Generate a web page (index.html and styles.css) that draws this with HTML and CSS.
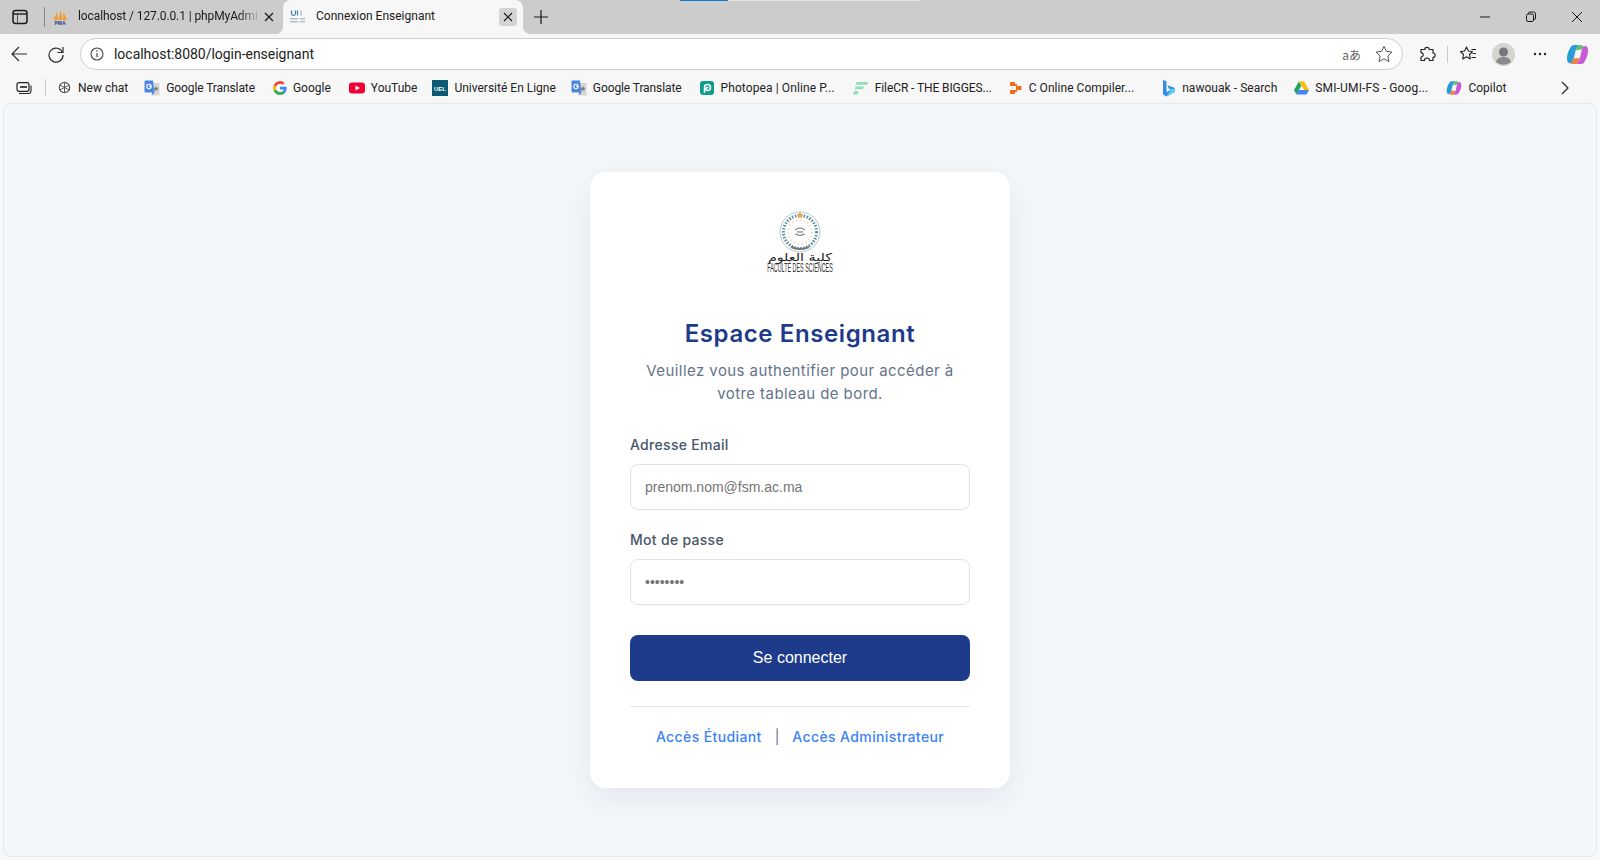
FILE: index.html
```html
<!DOCTYPE html>
<html lang="fr">
<head>
<meta charset="utf-8">
<title>Connexion Enseignant</title>
<link rel="stylesheet" href="styles.css">
</head>
<body>
<div class="browser">
  <header class="tabstrip">
    <div class="loadbar"><span class="loadbar-done"></span><span class="loadbar-rest"></span></div>
    <svg class="ic sidebar-ic" width="16" height="16" viewBox="0 0 16 16"><rect x="1" y="1.500" width="14" height="13" rx="2.500" fill="none" stroke="#1a1a1a" stroke-width="1.500"/><path d="M1 5h14" stroke="#1a1a1a" stroke-width="1.400" fill="none"/><path d="M5.500 5v9" stroke="#1a1a1a" stroke-width=".7"/></svg>
    <span class="strip-sep"></span>
    <div class="tab">
      <svg class="ic" width="16" height="16" viewBox="0 0 16 16"><path d="M1.500 11 5 3l1 8zM6.500 11 8.500 1l2 10zM11 11l.5-8 3.500 8z" fill="#f29a2e"/><text x="8" y="15.500" class="pma" text-anchor="middle">PMA</text></svg>
      <span class="tab-title tab-title-fade">localhost / 127.0.0.1 | phpMyAdmi</span>
      <svg class="ic tab-x" width="12" height="12" viewBox="0 0 12 12"><path d="M2 2l8 8M10 2l-8 8" stroke="#1a1a1a" stroke-width="1.200"/></svg>
    </div>
    <div class="tab tab-active">
      <svg class="ic" width="16" height="16" viewBox="0 0 16 16"><path d="M1.500 1.500v3a2 2 0 0 0 4 0v-3M7.500 6.500v-5" stroke="#3f87a8" stroke-width="1.200" fill="none"/><rect x="10" y="1" width="2" height="6" rx="1" fill="#c9d3da"/><path d="M0 9h8v1.500H0zM0 12h8v1.500H0zM9.500 9H15v1.500H9.500zM9.500 12H15v1.500H9.500z" fill="#b6bfc6"/></svg>
      <span class="tab-title">Connexion Enseignant</span>
      <span class="tab-close"><svg width="10" height="10" viewBox="0 0 10 10"><path d="M1 1l8 8M9 1l-8 8" stroke="#1a1a1a" stroke-width="1.200"/></svg></span>
    </div>
    <svg class="ic new-tab" width="16" height="16" viewBox="0 0 16 16"><path d="M8 1v14M1 8h14" stroke="#1a1a1a" stroke-width="1.200"/></svg>
    <div class="winctl">
      <svg width="12" height="12" viewBox="0 0 12 12"><path d="M1 6h10" stroke="#1a1a1a" stroke-width="1"/></svg>
      <svg width="12" height="12" viewBox="0 0 12 12"><rect x="1.500" y="3" width="7" height="7.500" rx="1.500" fill="none" stroke="#1a1a1a"/><path d="M3.500 3V2.500a1.500 1.500 0 0 1 1.500-1.500h3.500a2 2 0 0 1 2 2V7a1.500 1.500 0 0 1-1.500 1.500" fill="none" stroke="#1a1a1a"/></svg>
      <svg width="12" height="12" viewBox="0 0 12 12"><path d="M1 1l10 10M11 1L1 11" stroke="#1a1a1a" stroke-width="1"/></svg>
    </div>
  </header>

  <div class="toolbar">
    <svg class="ic back" width="18" height="18" viewBox="0 0 18 18"><path d="M17 9H2M9 2 2 9l7 7" fill="none" stroke="#2b2b2b" stroke-width="1.200"/></svg>
    <svg class="ic reload" width="18" height="18" viewBox="0 0 18 18"><path d="M15.500 7.500A7 7 0 1 0 16 10" fill="none" stroke="#2b2b2b" stroke-width="1.200"/><path d="M16 2v5.500h-5.500" fill="none" stroke="#2b2b2b" stroke-width="1.200"/></svg>
    <div class="omnibox">
      <svg class="ic" width="14" height="14" viewBox="0 0 14 14"><circle cx="7" cy="7" r="6" fill="none" stroke="#444" stroke-width="1.100"/><path d="M7 6v4.200" stroke="#444" stroke-width="1.200"/><circle cx="7" cy="4" r=".8" fill="#444"/></svg>
      <span class="url">localhost:8080/login-enseignant</span>
      <span class="aa">aあ</span>
      <svg class="ic" width="20" height="20" viewBox="0 0 20 20"><path d="m10 2.200 2.400 5.200 5.600.700-4.100 3.900 1.100 5.600-5-2.800-5 2.800 1.100-5.600L2 8.100l5.600-.700z" fill="none" stroke="#555" stroke-width="1" stroke-linejoin="round"/></svg>
    </div>
    <svg class="ic ext" width="18" height="18" viewBox="0 0 18 18"><path d="M3 4.500h3.800a2.200 2.200 0 1 1 4.400 0H15V8a2.200 2.200 0 1 1 0 4.400v3.100h-3.500a2.500 2.500 0 0 0-5 0H3V12a2.200 2.200 0 1 0 0-4.400z" fill="none" stroke="#222" stroke-width="1.200" stroke-linejoin="round"/></svg>
    <span class="tool-sep"></span>
    <svg class="ic fav" width="18" height="18" viewBox="0 0 18 18"><path d="m7.500 2 1.900 4 4.100.500-3 3 .8 4.500-3.800-2.200L3.700 14l.8-4.500-3-3 4.100-.500z" fill="none" stroke="#222" stroke-width="1.100" stroke-linejoin="round"/><path d="M12.500 4.500H17M13.500 8.500H17M12.500 12.500H17" stroke="#222" stroke-width="1.100"/></svg>
    <svg class="ic avatar" width="23" height="23" viewBox="0 0 23 23"><circle cx="11.500" cy="11.500" r="11.500" fill="#d6d4d0"/><circle cx="11.500" cy="9" r="4.500" fill="#777"/><path d="M4 19c1-4 4-5 7.500-5s6.500 1 7.500 5a11.500 11.500 0 0 1-15 0z" fill="#8a8a8a"/></svg>
    <svg class="ic dots" width="14" height="4" viewBox="0 0 14 4"><circle cx="2" cy="2" r="1.200" fill="#222"/><circle cx="7" cy="2" r="1.200" fill="#222"/><circle cx="12" cy="2" r="1.200" fill="#222"/></svg>
    <svg class="ic copilot-big" width="23" height="23" viewBox="0 0 24 24"><path d="M4 21c2 0 3.500-2 4-5h6.500c-1 3.500-2 5-4 6H7c-1 0-2-.4-3-1z" fill="#f4803c"/><path d="M9 2h5c-2 1-3 3-4 6l-2 8c-.5 3-2 5-4 5-2 0-3-2-3-5 0-4 2-9 4-12 1-1.500 2.500-2 4-2z" fill="#2a9bd8"/><path d="M9 2h6c2 0 3 1 3.500 2.500L15.500 7c-2 0-3.500 0-5.500 1 1-3 2-5 4-6z" fill="#5ec06b"/><path d="M14.500 22H10.500c2-1 3-3 4-6l1.500-7c.5-4 2-6 4-6 2 0 3 2 3 5 0 4-2 9-4 12-1 1.500-2.500 2-4 2z" fill="#c65ad6"/></svg>
  </div>

  <nav class="bookmarks">
    <svg class="ic bm-split" width="16" height="12" viewBox="0 0 16 12"><rect x="1" y=".7" width="12" height="8.600" rx="2" fill="none" stroke="#222" stroke-width="1.200"/><path d="M4 5h7" stroke="#222" stroke-width="1.600"/><path d="M15 3.500V9a2.500 2.500 0 0 1-2.500 2.500H3" fill="none" stroke="#222" stroke-width="1.100"/></svg>
    <span class="bm-sep"></span>
    <a class="bm"><svg width="15" height="15" viewBox="0 0 16 16"><rect width="16" height="16" rx="2" fill="#fff"/><circle cx="8" cy="8" r="5.500" fill="none" stroke="#555" stroke-width="1.400"/><path d="M8 2.500v11M3 5.500l10 5M13 5.500l-10 5" stroke="#555" stroke-width="1"/></svg><span>New chat</span></a>
    <a class="bm bm-gt"><svg width="16" height="16" viewBox="0 0 16 16"><path d="M7 3h8.500v12.500H8.500z" fill="#d6d6d6"/><path d="M1.500.5H9l1.500 12H1.500a1 1 0 0 1-1-1V1.500a1 1 0 0 1 1-1z" fill="#4a86e8"/><path d="M8.500 12.500 7.500 15.500 10.500 12.500z" fill="#3367c4"/><path d="m12 6 .8 1.800 1.800.2-1.400 1.200.4 1.800-1.600-1-1.600 1 .4-1.800L9.400 8l1.800-.2z" fill="#777"/><circle cx="5" cy="6.500" r="2.200" fill="none" stroke="#fff" stroke-width="1.100"/><path d="M5 6.500h2.200" stroke="#fff" stroke-width="1"/></svg><span>Google Translate</span></a>
    <a class="bm bm-google"><svg width="14" height="14" viewBox="0 0 18 18"><path d="M17.600 9.200q0-.9-.2-1.700H9v3.300h4.800a4.100 4.100 0 0 1-1.800 2.700v2.200h2.900a8.700 8.700 0 0 0 2.700-6.500z" fill="#4285f4"/><path d="M9 18q3.600 0 5.900-2.300L12 13.500q-1.200.8-3 .8a5.300 5.300 0 0 1-5-3.600H1v2.300A9 9 0 0 0 9 18z" fill="#34a853"/><path d="M4 10.700a5.300 5.300 0 0 1 0-3.400V5H1a9 9 0 0 0 0 8z" fill="#fbbc05"/><path d="M9 3.600q2 0 3.400 1.300l2.500-2.500A9 9 0 0 0 1 5l3 2.300a5.300 5.300 0 0 1 5-3.700z" fill="#ea4335"/></svg><span>Google</span></a>
    <a class="bm bm-yt"><svg width="16" height="16" viewBox="0 0 16 16"><rect y="2.500" width="16" height="11" rx="3" fill="#f00034"/><path d="M6.500 5.500v5L11 8z" fill="#fff"/></svg><span>YouTube</span></a>
    <a class="bm bm-uel"><svg width="16" height="16" viewBox="0 0 16 16"><rect width="16" height="16" fill="#0c5a74"/><text x="8" y="10.500" class="uel" text-anchor="middle">UEL</text></svg><span>Université En Ligne</span></a>
    <a class="bm bm-gt"><svg width="16" height="16" viewBox="0 0 16 16"><path d="M7 3h8.500v12.500H8.500z" fill="#d6d6d6"/><path d="M1.500.5H9l1.500 12H1.500a1 1 0 0 1-1-1V1.500a1 1 0 0 1 1-1z" fill="#4a86e8"/><path d="M8.500 12.500 7.500 15.500 10.500 12.500z" fill="#3367c4"/><path d="m12 6 .8 1.800 1.800.2-1.400 1.200.4 1.800-1.600-1-1.600 1 .4-1.800L9.400 8l1.800-.2z" fill="#777"/><circle cx="5" cy="6.500" r="2.200" fill="none" stroke="#fff" stroke-width="1.100"/><path d="M5 6.500h2.200" stroke="#fff" stroke-width="1"/></svg><span>Google Translate</span></a>
    <a class="bm bm-photopea"><svg width="14" height="14" viewBox="0 0 14 14"><rect width="14" height="14" rx="3" fill="#0e9c8c"/><path d="M4.500 12V6.500a3 3 0 1 1 3 3 1.500 1.500 0 1 1 1-2.500" fill="none" stroke="#fff" stroke-width="1.500"/></svg><span>Photopea | Online P...</span></a>
    <a class="bm bm-filecr"><svg width="16" height="16" viewBox="0 0 16 16"><path d="M3.500 2h12L14 4.800H2.500zM2.500 6.500h8.500L10 9.300H1.500zM1 11h4.500l-1 3.500H0z" fill="#8ee0bd"/></svg><span>FileCR - THE BIGGES...</span></a>
    <a class="bm bm-c"><svg width="12" height="14" viewBox="0 0 12 14"><path d="M0 1h5v4H0zM0 9h5v4H0zM6 5h5.500v4H6z" fill="#f56a16"/><path d="M5 3h2v2H5zM5 9h2v2H5z" fill="#f56a16"/></svg><span>C Online Compiler...</span></a>
    <a class="bm bm-bing"><svg width="14" height="18" viewBox="0 0 14 18"><path d="M1 1l3.500 1.200v11l4.500-2.700-2.200-1L5.500 6.300l7.500 2.700v3.800L4.500 17.500 1 15.500z" fill="#2f8fe8"/><path d="M9 10.500 13 9v3.800L4.500 17.500z" fill="#59d0f0"/></svg><span>nawouak - Search</span></a>
    <a class="bm bm-drive"><svg width="15" height="14" viewBox="0 0 15 14"><path d="M5 .5 0 9l2.500 4.500L7.500 5z" fill="#1fa463"/><path d="M5 9h10l-2.500 4.500h-10z" fill="#4285f4"/><path d="M5 .5h5L15 9h-5z" fill="#fbbc05"/><path d="M5 9h5L7.500 5z" fill="#fff"/></svg><span>SMI-UMI-FS - Goog...</span></a>
    <a class="bm"><svg width="16" height="16" viewBox="0 0 24 24"><path d="M4 21c2 0 3.500-2 4-5h6.500c-1 3.500-2 5-4 6H7c-1 0-2-.4-3-1z" fill="#f4803c"/><path d="M9 2h5c-2 1-3 3-4 6l-2 8c-.5 3-2 5-4 5-2 0-3-2-3-5 0-4 2-9 4-12 1-1.500 2.500-2 4-2z" fill="#2a9bd8"/><path d="M9 2h6c2 0 3 1 3.500 2.500L15.500 7c-2 0-3.500 0-5.500 1 1-3 2-5 4-6z" fill="#5ec06b"/><path d="M14.500 22H10.500c2-1 3-3 4-6l1.500-7c.5-4 2-6 4-6 2 0 3 2 3 5 0 4-2 9-4 12-1 1.500-2.500 2-4 2z" fill="#c65ad6"/></svg><span>Copilot</span></a>
    <svg class="ic bm-more" width="10" height="14" viewBox="0 0 10 14"><path d="m2 1 6 6-6 6" fill="none" stroke="#222" stroke-width="1.200"/></svg>
  </nav>

  <main class="viewport">
    <section class="card">
      <div class="logo">
        <svg width="66" height="72" viewBox="0 0 66 72">
          <circle cx="33" cy="27" r="20" fill="none" stroke="#b4c8d3" stroke-width="1"/>
          <circle cx="33" cy="27" r="16.500" fill="none" stroke="#5a8ba1" stroke-width="3" stroke-dasharray="1.500 1.500"/>
          <circle cx="33" cy="27" r="12" fill="none" stroke="#f0cf9f" stroke-width="2" stroke-dasharray="1 3"/>
          <path d="m33 6.500 1.200 2.400 2.600.3-1.900 1.700.5 2.600-2.400-1.300-2.400 1.300.5-2.600-1.900-1.700 2.600-.3z" fill="#e3a45b"/>
          <path d="M28 25q5-4 10 0M28 29q5 3 10 0M30 27h6" fill="none" stroke="#666" stroke-width="1"/>
          <path d="M24 42q9 4 18 0" fill="none" stroke="#777" stroke-width="2"/>
          <text class="logo-ar" text-anchor="middle" transform="translate(33 56) scale(1.3 1)">كلية العلوم</text>
          <text class="logo-fr" text-anchor="middle" transform="translate(33 67) scale(.45 1)">FACULTÉ DES SCIENCES</text>
        </svg>
      </div>
      <h1 class="title">Espace Enseignant</h1>
      <p class="subtitle">Veuillez vous authentifier pour accéder à votre tableau de bord.</p>
      <form class="form">
        <div class="field">
          <label class="label" for="email">Adresse Email</label>
          <input class="input" id="email" type="email" placeholder="prenom.nom@fsm.ac.ma">
        </div>
        <div class="field">
          <label class="label" for="password">Mot de passe</label>
          <input class="input" id="password" type="password" placeholder="••••••••">
        </div>
        <button class="submit" type="button">Se connecter</button>
      </form>
      <div class="links">
        <a class="link">Accès Étudiant</a>
        <span class="link-sep">|</span>
        <a class="link">Accès Administrateur</a>
      </div>
    </section>
  </main>
</div>
</body>
</html>
```

FILE: styles.css
```css
* { box-sizing: border-box; }
html, body { margin: 0; height: 100%; }
body { overflow: hidden; background: #f7f7f7; font-family: Roboto, "Noto Sans", sans-serif; color: #1a1a1a; }
svg { display: block; flex: none; }

.browser { width: 1600px; height: 860px; display: flex; flex-direction: column; }

/* tab strip */
.tabstrip { position: relative; flex: none; height: 34px; background: #cccccc; display: flex; align-items: center; padding-left: 12px; }
.loadbar { position: absolute; top: 0; left: 680px; display: flex; height: 1px; }
.loadbar-done { width: 48px; background: #0a78d4; }
.loadbar-rest { width: 193px; background: #e4e4e4; }
.sidebar-ic { margin-right: 16px; }
.strip-sep { width: 1px; height: 20px; background: #8a8a8a; margin-right: 1px; }
.tab { height: 34px; width: 237px; display: flex; align-items: center; padding: 0 6px 0 6px; }
.tab-title { font-size: 12px; white-space: nowrap; overflow: hidden; margin-left: 10px; flex: 1; padding-bottom: 3px; }
.tab-title-fade { letter-spacing: -.1px; -webkit-mask-image: linear-gradient(90deg, #000 88%, transparent 100%); mask-image: linear-gradient(90deg, #000 88%, transparent 100%); }
.tab-x { margin-left: 2px; margin-right: 2px; }
.tab-active { position: relative; width: 240px; background: #f7f7f7; border-radius: 8px 8px 0 0; padding: 0 6px 0 7px; }
.tab-active::before, .tab-active::after { content: ""; position: absolute; bottom: 0; width: 8px; height: 8px; }
.tab-active::before { left: -8px; background: radial-gradient(circle at 0 0, transparent 8px, #f7f7f7 8.5px); }
.tab-active::after { right: -8px; background: radial-gradient(circle at 100% 0, transparent 8px, #f7f7f7 8.5px); }
.tab-close { width: 18px; height: 18px; border-radius: 3px; background: #d4d4d4; display: flex; align-items: center; justify-content: center; }
.new-tab { margin-left: 10px; }
.winctl { margin-left: auto; display: flex; gap: 34px; padding-right: 17px; }

/* toolbar */
.toolbar { flex: none; height: 36px; background: #f7f7f7; display: flex; align-items: center; padding: 4px 0 0 10px; }
.reload { margin-left: 19px; }
.omnibox { margin-left: 15px; width: 1323px; height: 32px; flex: none; background: #fff; border: 1px solid #cfcfcf; border-radius: 16px; display: flex; align-items: center; padding: 0 8px 0 9px; }
.url { flex: 1; margin-left: 10px; font-size: 14px; color: #222; letter-spacing: -.03px; }
.aa { font-size: 12px; color: #666; margin-right: 13px; font-family: "Noto Sans CJK JP", "Noto Sans", sans-serif; }
.ext { margin-left: 15px; }
.tool-sep { width: 1px; height: 17px; background: #c8c8c8; margin-left: 11px; }
.fav { margin-left: 11px; }
.avatar { margin-left: 15px; }
.dots { margin-left: 18px; }
.copilot-big { margin-left: 19px; }

/* bookmarks */
.bookmarks { flex: none; height: 33px; background: #f7f7f7; display: flex; align-items: center; padding: 2px 0 0 16px; }
.bm-split { margin-right: 13px; }
.bm-sep { width: 1px; height: 17px; background: #c8c8c8; margin-right: 11px; }
.bm { display: flex; align-items: center; gap: 6px; font-size: 12px; white-space: nowrap; margin-right: 16px; color: #222; }
.bm-gt { letter-spacing: -.1px; margin-right: 18px; }
.bm-google { margin-right: 18px; }
.bm-yt { margin-right: 15px; }
.bm-uel { margin-right: 15px; }
.bm-photopea { gap: 7px; letter-spacing: .1px; margin-right: 18px; }
.bm-filecr { letter-spacing: -.1px; margin-right: 18px; }
.bm-c { gap: 7px; letter-spacing: .05px; }
.bm-bing { margin-left: 12px; letter-spacing: .05px; margin-right: 17px; }
.bm-drive { letter-spacing: .15px; margin-right: 18px; }
.bm-more { margin-left: auto; margin-right: 30px; }

/* content */
.viewport { flex: none; width: 1594px; height: 754px; margin: 0 3px; background: #f4f7fa; border: 1px solid #e6e8ea; border-radius: 8px; display: flex; align-items: center; justify-content: center; }
.card { width: 420px; height: 616px; background: #fff; border-radius: 16px; box-shadow: 0 10px 30px rgba(30, 40, 60, .08); padding: 33px 40px 0; text-align: center; font-family: Inter, sans-serif; }
.logo { height: 72px; display: flex; justify-content: center; }
.logo-ar { font: 400 11px "DejaVu Sans", sans-serif; fill: #222; }
.logo-fr { font: 400 12px "Liberation Sans", sans-serif; fill: #333; }
.pma { font: 700 5px "Liberation Sans", sans-serif; fill: #2b3f8c; }
.uel { font: 700 6px "Liberation Sans", sans-serif; fill: #fff; }

.title { margin: 39px 0 0; font-size: 24px; line-height: 36px; font-weight: 600; color: #1e3a8a; letter-spacing: .6px; }
.subtitle { margin: 7px 0 0; font-size: 15px; line-height: 23px; color: #64748b; letter-spacing: .43px; }
.form { margin-top: 29px; text-align: left; }
.field { margin-bottom: 19px; }
.label { display: block; font-size: 14px; line-height: 21px; font-weight: 500; color: #475569; letter-spacing: .3px; margin-bottom: 9px; }
.input { display: block; width: 100%; height: 46px; padding: 0 14px; background: #fff; border: 1px solid #dfe1ea; border-radius: 8px; font: 14px "Liberation Sans", Arial, sans-serif; outline: none; }
.input::placeholder { color: #757575; opacity: 1; }
.submit { display: block; width: 100%; height: 46px; margin-top: 30px; border: 0; border-radius: 8px; background: #1e3a8a; color: #fff; font: 16px "Liberation Sans", Arial, sans-serif; }
.links { margin-top: 25px; padding-top: 19px; border-top: 1px solid #e5e7eb; display: flex; justify-content: center; gap: 13px; font-size: 14px; line-height: 21px; font-weight: 500; letter-spacing: .38px; }
.link { color: #3b82f6; }
.link-sep { color: #64748b; font-weight: 400; letter-spacing: 0; }
```
